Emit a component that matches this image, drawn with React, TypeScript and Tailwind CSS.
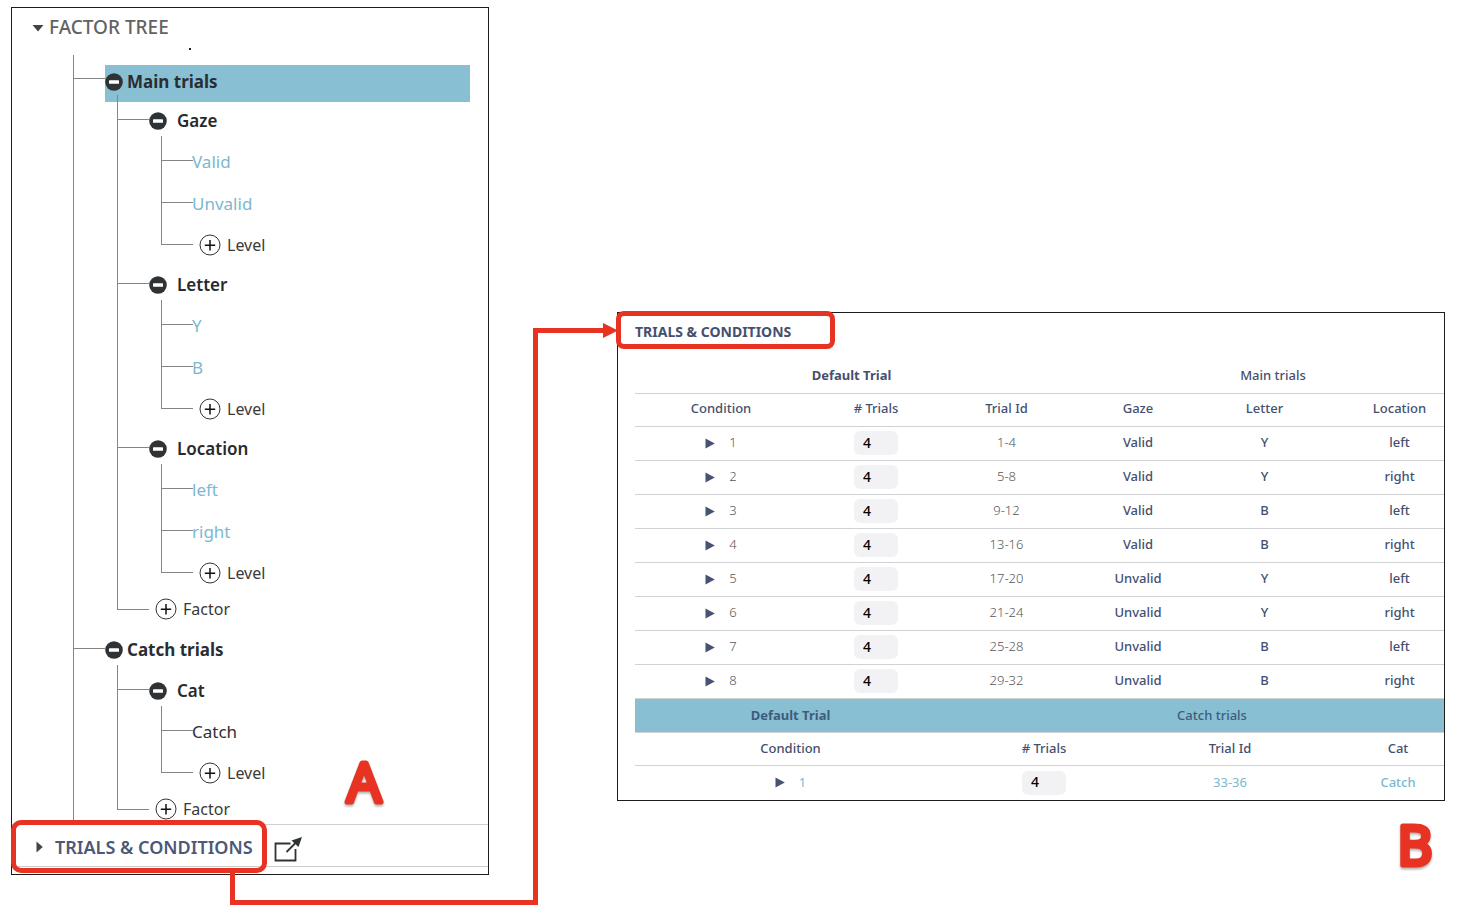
import type { ReactNode } from "react";

type Factor = { name: string; levels: string[]; plain?: boolean };
type TrialGroup = { name: string; selected?: boolean; factors: Factor[] };

const GROUPS: TrialGroup[] = [
  {
    name: "Main trials",
    selected: true,
    factors: [
      { name: "Gaze", levels: ["Valid", "Unvalid"] },
      { name: "Letter", levels: ["Y", "B"] },
      { name: "Location", levels: ["left", "right"] },
    ],
  },
  { name: "Catch trials", factors: [{ name: "Cat", levels: ["Catch"], plain: true }] },
];

const ROWS = [
  ["1", "1-4", "Valid", "Y", "left"],
  ["2", "5-8", "Valid", "Y", "right"],
  ["3", "9-12", "Valid", "B", "left"],
  ["4", "13-16", "Valid", "B", "right"],
  ["5", "17-20", "Unvalid", "Y", "left"],
  ["6", "21-24", "Unvalid", "Y", "right"],
  ["7", "25-28", "Unvalid", "B", "left"],
  ["8", "29-32", "Unvalid", "B", "right"],
];

function MinusIcon() {
  return (
    <svg viewBox="0 0 18 18" className="size-[18px]" aria-hidden="true">
      <circle cx="9" cy="9" r="8.8" fill="#2f3336" />
      <rect x="4" y="7.2" width="10" height="3.6" rx="0.6" fill="#fff" />
    </svg>
  );
}

function PlusIcon() {
  return (
    <svg viewBox="0 0 22 22" className="size-[22px]" aria-hidden="true">
      <circle cx="11" cy="11" r="10" fill="#fff" stroke="#333" strokeWidth="1" />
      <path d="M11 6v10.400M5.800 11.200h10.400" stroke="#111" strokeWidth="1.500" />
    </svg>
  );
}

/* One tree item: the elbow on the left, the item's own content on the right. */
function Branch({ elbow, last, children }: { elbow: string; last?: boolean; children: ReactNode }) {
  return (
    <li className="flex">
      <span className="flex w-8 shrink-0 flex-col" aria-hidden="true">
        <span className={`border-b border-l border-[#858585] ${elbow}`} />
        {!last && <span className="flex-1 border-l border-[#858585]" />}
      </span>
      <div className="min-w-0 flex-1">{children}</div>
    </li>
  );
}

function AddButton({ label }: { label: string }) {
  return (
    <button type="button" className="ml-1.5 flex items-center gap-1.5 text-base text-[#3a3a3a]">
      <PlusIcon />
      {label}
    </button>
  );
}

function FactorItem({ factor, first }: { factor: Factor; first: boolean }) {
  return (
    <Branch elbow={first ? "h-[25px]" : "h-[18px]"}>
      <div className={first ? "pt-[7px]" : ""}>
        <button type="button" className="flex h-[41px] items-center gap-2.5 pb-1 text-[17px] font-semibold text-[#2a2a2c]">
          <MinusIcon />
          {factor.name}
        </button>
        <ul className="-mt-[7px] ml-3">
          {factor.levels.map((level, i) => (
            <Branch key={level} elbow={i === 0 ? "h-[25px]" : "h-[18px]"}>
              <div className={i === 0 ? "pt-[7px]" : ""}>
                <div className={`-ml-px flex h-[42px] items-center pb-1 text-[17px] ${factor.plain ? "text-[#2f2f31]" : "text-[#7cb8ce]"}`}>
                  {level}
                </div>
              </div>
            </Branch>
          ))}
          <Branch elbow="h-[18px]" last>
            <div className="flex h-[39px] items-center pb-1">
              <AddButton label="Level" />
            </div>
          </Branch>
        </ul>
      </div>
    </Branch>
  );
}

function GroupItem({ group, first }: { group: TrialGroup; first: boolean }) {
  return (
    <Branch elbow={first ? "h-6" : "h-[18px]"}>
      <div className={first ? "pt-2.5 pb-[7px]" : ""}>
        <button
          type="button"
          className={`flex w-full items-center gap-1 pb-1 text-[17px] font-bold text-[#2a2e33] ${group.selected ? "h-[37px] bg-[#88bfd3]" : "h-[41px]"}`}
        >
          <MinusIcon />
          {group.name}
        </button>
        <ul className="-mt-[7px] ml-3">
          {group.factors.map((f, i) => (
            <FactorItem key={f.name} factor={f} first={i === 0} />
          ))}
          <Branch elbow="h-4" last>
            <div className="flex h-[30px] items-center">
              <AddButton label="Factor" />
            </div>
          </Branch>
        </ul>
      </div>
    </Branch>
  );
}

/* Figure letter with rounded corners: the round-joined outline softens the glyph. */
function Letter({ children }: { children: string }) {
  return (
    <svg viewBox="0 0 48 80" className="h-20 w-12 font-['Open_Sans',sans-serif] text-[54px] font-normal drop-shadow-[0_2px_1px_rgba(0,0,0,0.3)]">
      <text x="24" y="58" textAnchor="middle" fill="#e83323" stroke="#e83323" strokeWidth="5" strokeLinejoin="round">
        {children}
      </text>
    </svg>
  );
}

function FactorTreePanel() {
  return (
    <section className="relative w-[478px] shrink-0 border border-[#1c1c1c] bg-white pb-[7px]">
      <h2>
        <button type="button" className="ml-5 flex h-[39px] items-center gap-[5px] text-[19px] font-medium text-[#636363]">
          <svg viewBox="0 0 12 8" className="h-2 w-3" aria-hidden="true">
            <path d="M0.500 1h11L6 7.500z" fill="#444" />
          </svg>
          FACTOR TREE
        </button>
      </h2>
      <div className="mt-px ml-[177px] size-0.5 bg-[#222]" aria-hidden="true" />
      <ul className="mt-[5px] mr-[18px] ml-[61px]">
        {GROUPS.map((g, i) => (
          <GroupItem key={g.name} group={g} first={i === 0} />
        ))}
      </ul>
      <div className="flex h-[43px] items-center border-y border-[#cfcfcf] pt-[3px] pl-6">
        <button type="button" className="flex items-center gap-3 text-lg font-semibold text-[#4b5877]">
          <svg viewBox="0 0 7 12" className="h-3 w-[7px]" aria-hidden="true">
            <path d="M0.500 0.500L6.800 6L0.500 11.500z" fill="#444" />
          </svg>
          TRIALS &amp; CONDITIONS
        </button>
        <a href="#trials" aria-label="Open trials and conditions in a new window" className="ml-[21px] pt-1">
          <svg viewBox="0 0 28 26" className="h-[26px] w-7" aria-hidden="true">
            <path d="M16.500 7.500H1.500v17H21.500V13" fill="none" stroke="#2f3336" strokeWidth="1.800" />
            <path d="M12.500 16L23 5.500" stroke="#2f3336" strokeWidth="1.800" />
            <path d="M28 1L24.500 11L17.500 4.500z" fill="#2f3336" />
          </svg>
        </a>
      </div>
      <div className="pointer-events-none absolute bottom-px -left-px h-[53px] w-64 rounded-[10px] border-5 border-[#e83323]" />
      <div className="absolute right-[100px] bottom-[50px]">
        <Letter>A</Letter>
      </div>
    </section>
  );
}

function ConditionCell({ n, tone }: { n: string; tone: string }) {
  return (
    <td className={tone}>
      <div className="flex items-center justify-center gap-3.5">
        <button type="button" aria-label={`Expand condition ${n}`}>
          <svg viewBox="0 0 10 11" className="h-[11px] w-2.5" aria-hidden="true">
            <path d="M0.500 0.500L9.800 5.500L0.500 10.500z" fill="#465373" />
          </svg>
        </button>
        {n}
      </div>
    </td>
  );
}

function CountCell({ label }: { label: string }) {
  return (
    <td>
      <input
        type="text"
        defaultValue="4"
        aria-label={label}
        className="mx-auto block h-6 w-11 rounded-md bg-[#f2f2f4] px-[9px] pb-0.5 text-sm font-medium text-black"
      />
    </td>
  );
}

const LINE = "border-b border-[#d0d2d4]";

function TrialsPanel() {
  return (
    <section id="trials" className="relative overflow-hidden border border-[#1c1c1c] bg-white pl-[17px] text-[13px] text-[#45506f]">
      <h2 className="flex h-[47px] items-center pb-2.5 text-sm font-bold">TRIALS &amp; CONDITIONS</h2>
      <table className="w-[calc(100%+34px)] table-fixed border-collapse text-center">
        <colgroup>
          <col className="w-[172px]" />
          <col className="w-[138px]" />
          <col className="w-[123px]" />
          <col className="w-[140px]" />
          <col className="w-[113px]" />
          <col className="w-[157px]" />
        </colgroup>
        <thead>
          <tr className={`h-[33px] ${LINE}`}>
            <th colSpan={3} className="pb-0.5 font-bold">Default Trial</th>
            <th colSpan={3} className="pb-0.5 font-medium">Main trials</th>
          </tr>
          <tr className={`h-[33px] ${LINE}`}>
            {["Condition", "# Trials", "Trial Id", "Gaze", "Letter", "Location"].map((h) => (
              <th key={h} className="pb-0.5 font-medium">{h}</th>
            ))}
          </tr>
        </thead>
        <tbody>
          {ROWS.map(([n, ids, gaze, letter, location]) => (
            <tr key={n} className={`h-[34px] font-medium ${LINE}`}>
              <ConditionCell n={n} tone="font-light text-[#55575c]" />
              <CountCell label={`Trials for condition ${n}`} />
              <td className="font-light text-[#55575c]">{ids}</td>
              <td>{gaze}</td>
              <td>{letter}</td>
              <td>{location}</td>
            </tr>
          ))}
        </tbody>
      </table>
      <table className="w-[calc(100%+34px)] table-fixed border-collapse text-center">
        <colgroup>
          <col className="w-[311px]" />
          <col className="w-[196px]" />
          <col className="w-[176px]" />
          <col className="w-[160px]" />
        </colgroup>
        <thead>
          <tr className={`h-[34px] bg-[#88bfd3] text-[#3f5c7c] ${LINE}`}>
            <th className="font-bold">Default Trial</th>
            <th colSpan={3} className="font-medium">Catch trials</th>
          </tr>
          <tr className={`h-[33px] ${LINE}`}>
            {["Condition", "# Trials", "Trial Id", "Cat"].map((h) => (
              <th key={h} className="font-medium">{h}</th>
            ))}
          </tr>
        </thead>
        <tbody>
          <tr className="h-[34px] text-[#7cb8ce]">
            <ConditionCell n="1" tone="font-normal" />
            <CountCell label="Trials for catch condition 1" />
            <td>33-36</td>
            <td className="font-medium">Catch</td>
          </tr>
        </tbody>
      </table>
    </section>
  );
}

export default function App() {
  return (
    <main className="relative flex min-h-screen items-start bg-white pt-[7px] pr-[17px] pl-[11px] font-['Noto_Sans',sans-serif]">
      <FactorTreePanel />
      <div className="mt-[305px] ml-32 flex min-w-0 flex-1 flex-col">
        <div className="relative">
          <TrialsPanel />
          <div className="pointer-events-none absolute -top-px -left-px h-[38px] w-[219px] rounded-lg border-5 border-[#e83323]" />
        </div>
        <div className="mt-1.5 mr-1.5 self-end">
          <Letter>B</Letter>
        </div>
      </div>
      <svg viewBox="0 0 620 910" className="pointer-events-none absolute top-0 left-0 h-[910px] w-[620px]" aria-hidden="true">
        <path d="M232.500 871V902.500H535.500V330.500H605" fill="none" stroke="#e83323" strokeWidth="5" />
        <path d="M603 323L618 330.500L603 338z" fill="#e83323" />
      </svg>
    </main>
  );
}
